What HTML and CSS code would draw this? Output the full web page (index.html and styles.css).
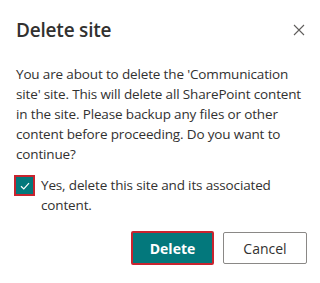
FILE: index.html
```html
<!DOCTYPE html>
<html lang="en">

<head>
  <meta charset="UTF-8">
  <meta name="viewport" content="width=device-width, initial-scale=1.0">
  <title>Delete site</title>
  <link rel="stylesheet" href="styles.css">
</head>

<body>
  <div class="dialog">
    <div class="dialog-header">
      <h1 class="dialog-title">Delete site</h1>
      <button class="close-button" aria-label="Close">
        <svg width="12" height="12" viewBox="0 0 12 12">
          <path d="M1 1 L11 11 M11 1 L1 11" stroke="#605e5c" stroke-width="1.1" fill="none" />
        </svg>
      </button>
    </div>

    <p class="dialog-text">
      You are about to delete the 'Communication site' site. This will delete all SharePoint content
      in the site. Please backup any files or other content before proceeding. Do you want to
      continue?
    </p>

    <label class="confirm">
      <span class="checkbox">
        <svg width="12" height="12" viewBox="0 0 12 12">
          <path d="M2 6.3 L4.8 9 L10 3.2" stroke="#fff" stroke-width="1.2" fill="none" />
        </svg>
      </span>
      <span class="confirm-text">Yes, delete this site and its associated content.</span>
    </label>

    <div class="dialog-footer">
      <button class="btn primary">Delete</button>
      <button class="btn">Cancel</button>
    </div>
  </div>
</body>

</html>
```

FILE: styles.css
```css
body {
  margin: 0;
  background-color: #fff;
  font-family: "Open Sans", "Noto Sans", sans-serif;
  color: #323130;
}

.dialog {
  padding: 16px 13px 17px 16px;
}

.dialog-header {
  display: flex;
  justify-content: space-between;
  align-items: center;
}

.dialog-title {
  margin: 0;
  font-size: 19px;
  font-weight: 550;
  line-height: 28px;
  letter-spacing: -0.2px;
}

.close-button {
  background: none;
  border: none;
  padding: 0;
  margin-right: 2px;
  width: 12px;
  height: 12px;
  display: flex;
  cursor: pointer;
}

.dialog-text {
  margin: 20px -4px 0 0;
  font-size: 13.5px;
  line-height: 20px;
  letter-spacing: -0.15px;
}

.confirm {
  display: flex;
  align-items: flex-start;
  margin-top: 11px;
}

.checkbox {
  flex: none;
  width: 17px;
  height: 17px;
  border: 2px solid #c8242f;
  background-color: #03787c;
  display: flex;
  justify-content: center;
  align-items: center;
  margin-left: -2px;
  margin-top: 0;
}

.confirm-text {
  margin-left: 6px;
  margin-right: 30px;
  font-size: 13.5px;
  line-height: 20px;
  letter-spacing: -0.15px;
}

.dialog-footer {
  display: flex;
  justify-content: flex-end;
  gap: 9px;
  margin-top: 17px;
}

.btn {
  font-family: "Open Sans", "Noto Sans", sans-serif;
  font-size: 14px;
  font-weight: 400;
  color: #323130;
  background-color: #fff;
  border: 1px solid #8a8886;
  border-radius: 2px;
  width: 84px;
  height: 32px;
  cursor: pointer;
}

.btn.primary {
  width: 83px;
  height: 34px;
  margin-top: -1px;
  color: #fff;
  font-weight: 700;
  background-color: #03787c;
  border: 2px solid #c8242f;
}
```
